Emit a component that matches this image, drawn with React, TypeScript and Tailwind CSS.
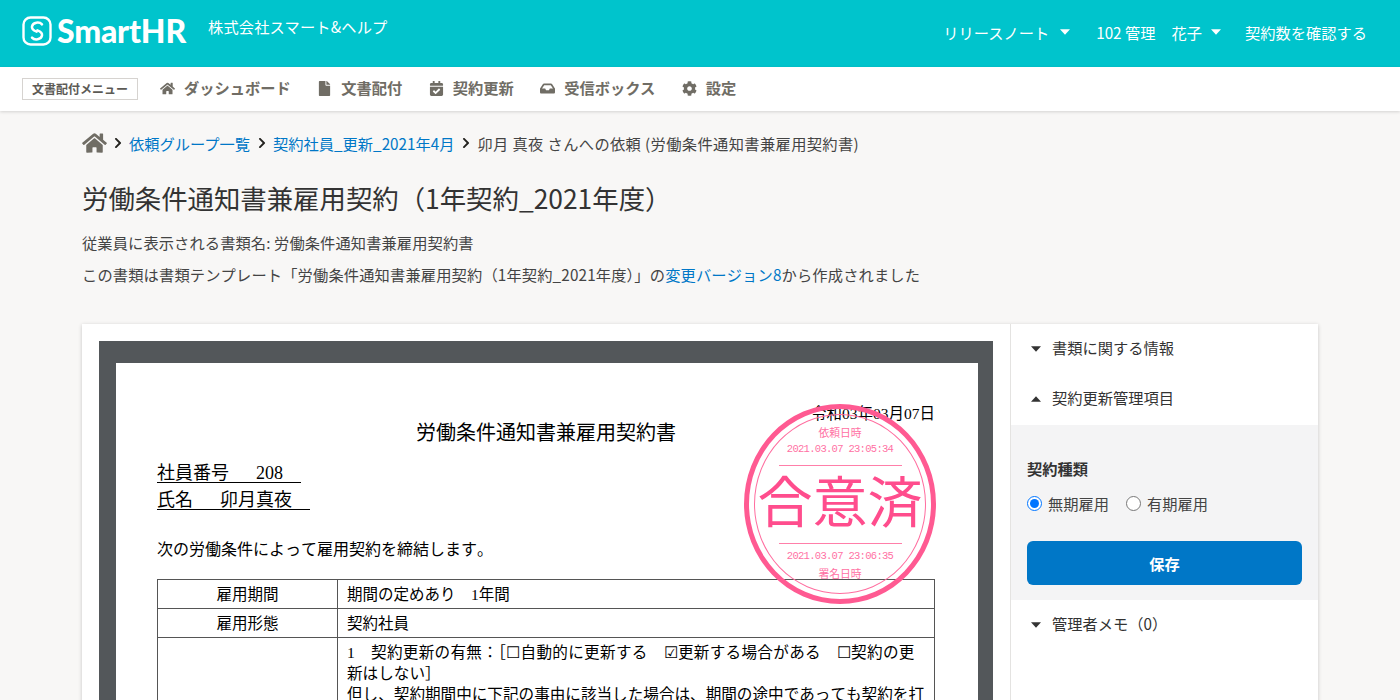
import { FaHome, FaFile, FaCalendarCheck, FaInbox, FaCog, FaChevronRight } from 'react-icons/fa'

const navItems = [
  { label: 'ダッシュボード', icon: FaHome },
  { label: '文書配付', icon: FaFile },
  { label: '契約更新', icon: FaCalendarCheck },
  { label: '受信ボックス', icon: FaInbox },
  { label: '設定', icon: FaCog },
]

function Caret({ up = false, className = '' }: { up?: boolean; className?: string }) {
  return (
    <svg viewBox="0 0 10 6" className={`w-[10px] h-[6px] fill-current ${className}`}>
      <path d={up ? 'M5 0.2 L10 5.8 H0 Z' : 'M0 0.2 H10 L5 5.8 Z'} />
    </svg>
  )
}

function Logo() {
  return (
    <div className="flex items-center gap-[5px] text-white">
      <svg viewBox="0 0 30 30" className="w-[30px] h-[30px]" fill="none" stroke="currentColor">
        <rect x="1.5" y="1.5" width="27" height="27" rx="7" strokeWidth="2.4" />
        <path d="M20 8.4 C17.4 5.4 10.8 6.2 10 10.4 C9.4 13.6 12.4 14.8 14.6 15.6" strokeWidth="2.5" strokeLinecap="round" />
        <path d="M10 21.6 C12.6 24.6 19.2 23.8 20 19.6 C20.6 16.4 17.6 15.2 15.4 14.4" strokeWidth="2.5" strokeLinecap="round" />
      </svg>
      <span className="font-['Lato',sans-serif] font-black text-[32px] leading-none tracking-[-0.2px]">SmartHR</span>
    </div>
  )
}

function Stamp() {
  return (
    <div className="absolute left-[628px] top-[41px] w-[192px] h-[200px] rounded-[50%] border-[5px] border-[#ff5a92] flex items-center justify-center text-[#ff4d8d]">
      <div className="w-[172px] h-[180px] rounded-[50%] border border-[#ff6d9f] flex flex-col items-center pt-[9px] font-['Noto_Sans_CJK_JP',sans-serif]">
        <p className="text-[10.8px] leading-[16px] opacity-80">依頼日時</p>
        <p className="text-[10.5px] leading-[16px] mt-[1px] opacity-80 tracking-[-0.7px] font-['Liberation_Mono','Noto_Sans_CJK_JP',monospace]">2021.03.07 23:05:34</p>
        <div className="w-[123px] h-[1px] bg-[#ff7fa9] mt-[8px]" />
        <p className="text-[55px] leading-[64px] mb-[13px] whitespace-nowrap">合意済</p>
        <div className="w-[123px] h-[1px] bg-[#ff7fa9]" />
        <p className="text-[10.5px] leading-[16px] mt-[4px] opacity-80 tracking-[-0.7px] font-['Liberation_Mono','Noto_Sans_CJK_JP',monospace]">2021.03.07 23:06:35</p>
        <p className="text-[10.8px] leading-[15px] mt-[2px] opacity-80">署名日時</p>
      </div>
    </div>
  )
}

function Document() {
  return (
    <div className="w-[928px] shrink-0 pl-[17px] pr-[17px] pt-[17px]">
      <div className="bg-[#53575a] pl-[17px] pr-[15px] pt-[22px] h-[600px]">
        <div className="relative bg-white h-full pl-[41px] pr-[43px] pt-[41px] text-black [font-kerning:none] font-['Liberation_Serif','Noto_Sans_CJK_JP',serif]">
          <p className="text-right text-[15.5px] leading-[20px]">令和03年03月07日</p>
          <p className="text-center text-[20px] leading-[18px]">労働条件通知書兼雇用契約書</p>
          <p className="mt-[18px] text-[18px] leading-[27px]">
            <span className="underline underline-offset-[3px] whitespace-pre">社員番号　  208　</span>
          </p>
          <p className="text-[18px] leading-[27px]">
            <span className="underline underline-offset-[3px] whitespace-pre">氏名　  卯月真夜　</span>
          </p>
          <p className="mt-[24px] text-[16px] leading-[24px]">次の労働条件によって雇用契約を締結します。</p>
          <div className="mt-[17px] border border-[#555] text-[15.5px] leading-[21px]">
            <div className="flex h-[29px] border-b border-[#555]">
              <div className="w-[180px] shrink-0 border-r border-[#555] flex items-center justify-center">雇用期間</div>
              <div className="pl-[9px] flex items-center">期間の定めあり　1年間</div>
            </div>
            <div className="flex h-[29px] border-b border-[#555]">
              <div className="w-[180px] shrink-0 border-r border-[#555] flex items-center justify-center">雇用形態</div>
              <div className="pl-[9px] flex items-center">契約社員</div>
            </div>
            <div className="flex">
              <div className="w-[180px] shrink-0 border-r border-[#555]" />
              <div className="pl-[9px] pr-[10px] pt-[4px] text-[15.6px] leading-[21px]">
                <span className="tracking-[0.3px]">1　契約更新の有無：［☐自動的に更新する　☑更新する場合がある　☐契約の更</span>
                <br />
                新はしない］
                <br />
                但し、契約期間中に下記の事由に該当した場合は、期間の途中であっても契約を打ち切ることがある。
              </div>
            </div>
          </div>
          <Stamp />
        </div>
      </div>
    </div>
  )
}

function Section({ label, up = false }: { label: string; up?: boolean }) {
  return (
    <div className="flex items-center h-[50px] pl-[20px] gap-[11px] text-[#333]">
      <Caret up={up} />
      <span className="text-[15.25px] mb-[3px]">{label}</span>
    </div>
  )
}

function Sidebar() {
  return (
    <aside className="flex-1 border-l border-[#e4e3e1]">
      <Section label="書類に関する情報" />
      <Section label="契約更新管理項目" up />
      <div className="mt-[1px] bg-[#f4f4f5] h-[175px] px-[16px] pt-[32px]">
        <p className="text-[15.25px] leading-[22px] font-bold text-[#333]">契約種類</p>
        <div className="flex items-center mt-[13px] text-[15.25px] leading-[22px] text-[#444]">
          <label className="flex items-center gap-[6px]">
            <input type="radio" name="contract" defaultChecked className="w-[15px] h-[15px] m-0 accent-[#0075ff]" />
            無期雇用
          </label>
          <label className="flex items-center gap-[6px] ml-[17px]">
            <input type="radio" name="contract" className="w-[15px] h-[15px] m-0" />
            有期雇用
          </label>
        </div>
        <button className="mt-[27px] w-full h-[44px] rounded-[6px] bg-[#0077c7] text-white text-[15.25px] font-bold">保存</button>
      </div>
      <Section label="管理者メモ（0）" />
    </aside>
  )
}

export default function App() {
  return (
    <div className="h-screen overflow-hidden bg-[#f8f7f6] font-['Noto_Sans_CJK_JP',sans-serif] text-[#23221e]">
      <header className="h-[67px] bg-[#00c4cc] flex justify-between text-white text-[15.25px] pl-[22px] pr-[33px]">
        <div className="flex items-start pt-[15px]">
          <Logo />
          <span className="ml-[22px] leading-[22px] tracking-[0.15px]">株式会社スマート&ヘルプ</span>
        </div>
        <div className="flex items-center pb-[3px]">
          <span>リリースノート</span>
          <Caret className="ml-[11px]" />
          <span className="ml-[26px]">102 管理</span>
          <span className="ml-[16px]">花子</span>
          <Caret className="ml-[9px]" />
          <span className="ml-[24px]">契約数を確認する</span>
        </div>
      </header>

      <nav className="relative h-[44px] bg-white shadow-[0_1px_3px_rgba(0,0,0,0.15)] flex items-center pl-[22px]">
        <span className="w-[116px] h-[22px] border border-[#d6d3d0] text-[12px] font-bold text-[#5c5a55] flex items-center justify-center mr-[22px]">文書配付メニュー</span>
        <div className="flex items-center gap-[26.5px] pb-[4px]">
          {navItems.map((item, index) => (
            <div key={index} className="flex items-center gap-[9px] text-[15.25px] font-bold text-[#706d65]">
              <item.icon className="w-[15px] h-[15px] mt-[2px]" />
              {item.label}
            </div>
          ))}
        </div>
      </nav>

      <main className="px-[82px] pt-[21px]">
        <div className="flex items-center text-[15.25px] leading-[22px]">
          <FaHome className="w-[25px] h-[22px] text-[#706d65]" />
          <FaChevronRight className="w-[10px] h-[12px] mx-[6px] text-[#23221e]" />
          <a className="text-[#0077c7]">依頼グループ一覧</a>
          <FaChevronRight className="w-[10px] h-[12px] mx-[6.5px] text-[#23221e]" />
          <a className="text-[#0077c7]">契約社員_更新_2021年4月</a>
          <FaChevronRight className="w-[10px] h-[12px] mx-[6.5px] text-[#23221e]" />
          <span className="text-[#444] tracking-[0.37px]">卯月 真夜 さんへの依頼 (労働条件通知書兼雇用契約書)</span>
        </div>

        <h1 className="mt-[25px] text-[26.4px] leading-[38px] text-[#333]">労働条件通知書兼雇用契約（1年契約_2021年度）</h1>

        <p className="mt-[14px] text-[15.25px] leading-[22px] text-[#444] tracking-[0.1px]">従業員に表示される書類名: 労働条件通知書兼雇用契約書</p>
        <p className="mt-[10px] text-[15.25px] leading-[22px] text-[#444] [font-kerning:none] tracking-[0.15px]">
          この書類は書類テンプレート「労働条件通知書兼雇用契約（1年契約_2021年度）」の
          <a className="text-[#0077c7]">変更バージョン8</a>
          から作成されました
        </p>

        <section className="mt-[39px] bg-white flex shadow-[0_1px_4px_rgba(0,0,0,0.2)] h-[500px]">
          <Document />
          <Sidebar />
        </section>
      </main>
    </div>
  )
}
